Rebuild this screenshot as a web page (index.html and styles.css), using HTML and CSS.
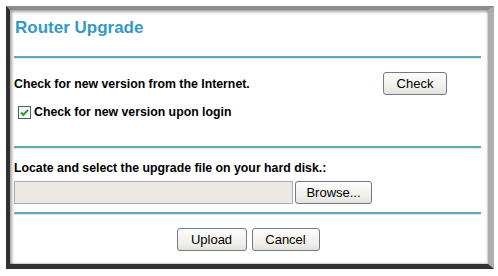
FILE: index.html
```html
<!DOCTYPE html>
<html>
<head>
<meta charset="utf-8">
<link rel="stylesheet" href="styles.css">
</head>
<body>
<div class="frame">
  <h1 class="title">Router Upgrade</h1>
  <div class="rule"></div>
  <div class="row row-check">
    <span class="label">Check for new version from the Internet.</span>
    <button class="btn btn-check" type="button">Check</button>
  </div>
  <div class="row row-login">
    <span class="cbox"><svg width="11" height="11" viewBox="0 0 11 11"><path d="M2 5.5 L4.3 8 L9 2.8" fill="none" stroke="#25a225" stroke-width="2"/></svg></span>
    <span class="label">Check for new version upon login</span>
  </div>
  <div class="rule rule-2"></div>
  <div class="label locate">Locate and select the upgrade file on your hard disk.:</div>
  <div class="row row-file">
    <span class="file-input"></span>
    <button class="btn btn-browse" type="button">Browse...</button>
  </div>
  <div class="rule rule-3"></div>
  <div class="actions">
    <button class="btn btn-upload" type="button">Upload</button>
    <button class="btn btn-cancel" type="button">Cancel</button>
  </div>
</div>
</body>
</html>
```

FILE: styles.css
```css
html, body {
  margin: 0;
  padding: 0;
  background: #ffffff;
}
body {
  font-family: "Liberation Sans", Arial, sans-serif;
  color: #000;
}
.frame {
  box-sizing: border-box;
  margin: 6px 0 0 6px;
  width: 488px;
  height: 263px;
  border-top: 4px solid #8c8c8c;
  border-left: 4px solid #2f2f2f;
  border-right: 6px solid #adadad;
  border-bottom: 5px solid #333333;
  box-shadow: inset 2px 2px 3px rgba(0,0,0,0.35), inset -1px -1px 2px rgba(0,0,0,0.2);
  padding: 8px 7px 0 4px;
  background: #fff;
}
.title {
  margin: 0;
  font-size: 17px;
  line-height: 20px;
  font-weight: bold;
  color: #3598c8;
  padding-left: 1px;
}
.rule {
  margin-top: 18px;
  height: 2px;
  background: #61a8b8;
  border-bottom: 1px solid #cdeff6;
}
.rule-2 { margin-top: 27px; }
.rule-3 { margin-top: 8px; }
.label {
  font-size: 12.3px;
  font-weight: bold;
  line-height: 14px;
}
.row {
  display: flex;
  align-items: center;
}
.row-check {
  margin-top: 13px;
  justify-content: space-between;
  padding-right: 34px;
}
.row-login {
  margin-top: 10px;
  padding-left: 4px;
  gap: 3px;
}
.cbox {
  box-sizing: border-box;
  width: 13px;
  height: 13px;
  border: 1px solid #3f5f7a;
  background: linear-gradient(#eef0f2, #ffffff);
  display: flex;
  align-items: center;
  justify-content: center;
}
.cbox svg { display: block; }
.locate {
  margin-top: 12px;
}
.row-file {
  margin-top: 6px;
  gap: 2px;
}
.file-input {
  box-sizing: border-box;
  width: 279px;
  height: 23px;
  background: #ece9e3;
  border: 1px solid #a6adb8;
}
.btn {
  box-sizing: border-box;
  height: 23px;
  font-family: "Liberation Sans", Arial, sans-serif;
  font-size: 13px;
  color: #000;
  border: 1px solid #6e7b88;
  border-radius: 3px;
  background: linear-gradient(#fdfdfb, #efeee9 70%, #e3e1da);
  padding: 0;
  line-height: 20px;
}
.btn-check { width: 64px; }
.btn-browse { width: 77px; }
.btn-upload { width: 70px; }
.btn-cancel { width: 68px; }
.actions {
  margin-top: 13px;
  display: flex;
  justify-content: center;
  gap: 5px;
  padding-left: 1px;
}
```
